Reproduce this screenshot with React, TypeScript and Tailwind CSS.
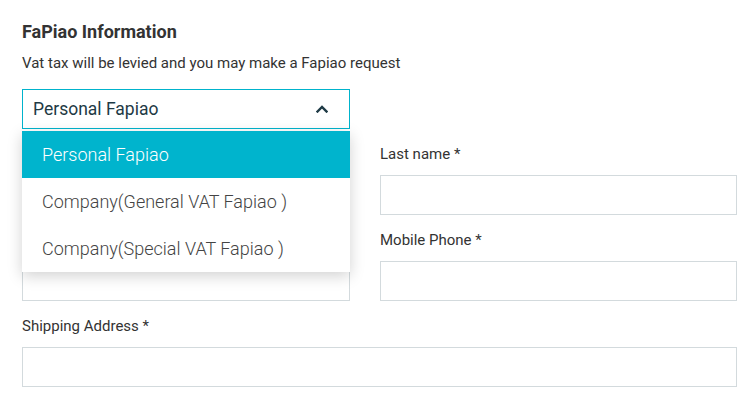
import { useState } from 'react';

const options = ['Personal Fapiao', 'Company(General VAT Fapiao )', 'Company(Special VAT Fapiao )'];

function Field({ label, className = '' }: { label: string; className?: string }) {
  return (
    <div className={className}>
      <label className="block text-[15px] leading-[20px] text-[#333]">{label}</label>
      <input
        type="text"
        className="mt-[11px] block h-[40px] w-full border border-[#d3dadd] bg-white px-3 outline-none"
      />
    </div>
  );
}

export default function App() {
  const [selected, setSelected] = useState(0);
  const [open, setOpen] = useState(true);

  return (
    <div
      className="min-h-[410px] bg-white px-[22px] pt-[22px]"
      style={{ fontFamily: 'Roboto, "Liberation Sans", sans-serif' }}
    >
      <div className="w-[715px]">
        <h2 className="text-[18px] font-bold leading-[20px] text-[#333]">FaPiao Information</h2>
        <p className="mt-[11px] text-[15px] leading-[20px] text-[#333]">
          Vat tax will be levied and you may make a Fapiao request
        </p>

        {/* Fapiao type select */}
        <div className="relative z-10 mt-[16px] w-[328px]">
          <button
            onClick={() => setOpen(!open)}
            className="flex h-[40px] w-full items-center justify-between border border-[#00b3cc] bg-white pl-[10px] pr-[21px] text-left"
          >
            <span className="text-[17.5px] text-[#1e3a45]">{options[selected]}</span>
            <svg width="12" height="8" viewBox="0 0 12 8" fill="none">
              <polyline
                points="1.5,6.5 6,2 10.5,6.5"
                stroke="#1e3a45"
                strokeWidth="2.4"
                strokeLinecap="square"
              />
            </svg>
          </button>

          {open && (
            <ul className="absolute left-0 top-[42px] w-full bg-white shadow-[0_4px_14px_rgba(0,0,0,0.18)]">
              {options.map((opt, i) => (
                <li
                  key={opt}
                  onClick={() => {
                    setSelected(i);
                    setOpen(false);
                  }}
                  className={
                    i === selected
                      ? 'flex h-[47px] cursor-pointer items-center bg-[#00b4cd] pl-[20px] text-[18px] font-light text-white'
                      : 'flex h-[47px] cursor-pointer items-center pl-[20px] text-[18px] font-light text-[#444]'
                  }
                >
                  {opt}
                </li>
              ))}
            </ul>
          )}
        </div>

        <div className="mt-[15px] grid grid-cols-[328px_357px] gap-x-[30px] gap-y-[15px]">
          <Field label="First name *" />
          <Field label="Last name *" />
          <Field label="Email *" />
          <Field label="Mobile Phone *" />
          <Field label="Shipping Address *" className="col-span-2" />
        </div>
      </div>
    </div>
  );
}
